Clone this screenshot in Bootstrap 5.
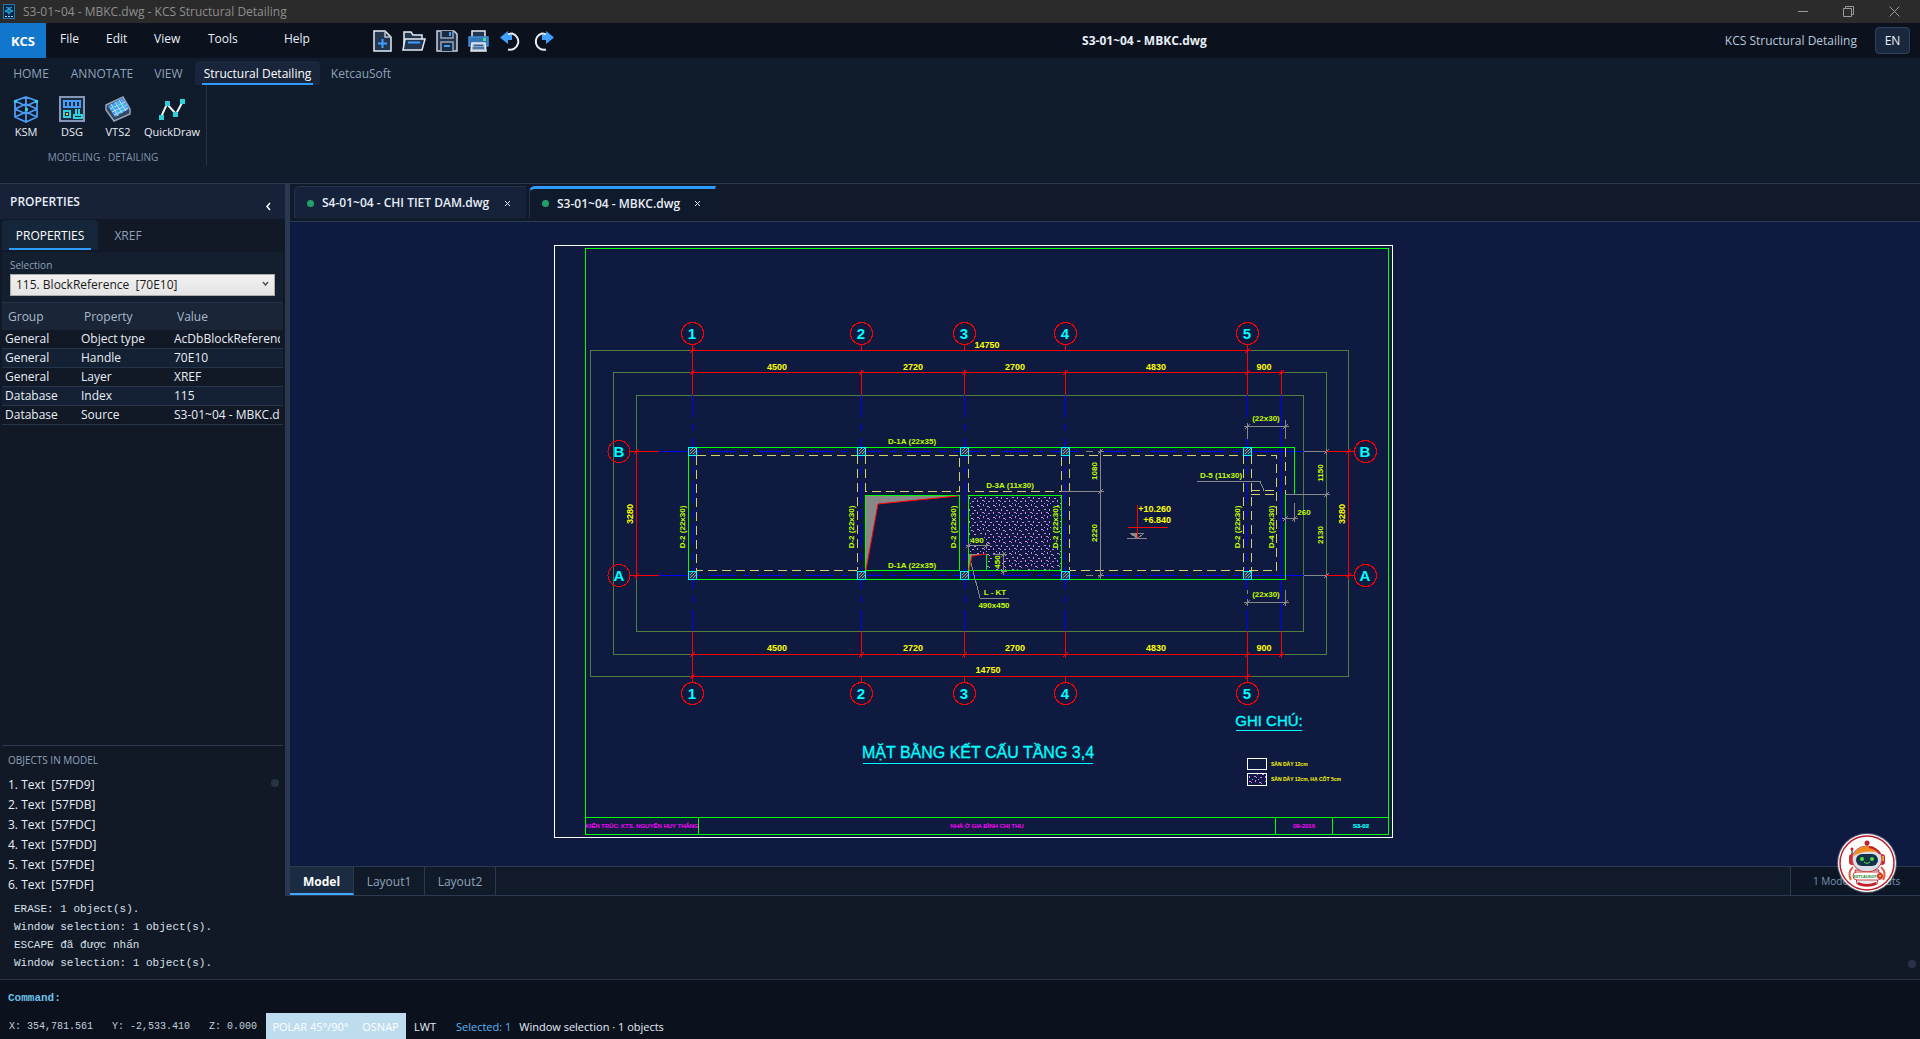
<!DOCTYPE html>
<html lang="en">
<head>
<meta charset="utf-8">
<meta name="viewport" content="width=device-width, initial-scale=1">
<title>S3-01~04 - MBKC.dwg - KCS Structural Detailing</title>
<link href="https://cdn.jsdelivr.net/npm/bootstrap@5.3.0/dist/css/bootstrap.min.css" rel="stylesheet">
<style>
:root{--line:#2a3a50;--ink:#e8eef6;--muted:#8fa2ba;--accent:#2f9bff;--pane:#111826}
body{font:12px/16px "Open Sans","Noto Sans",sans-serif;color:var(--ink);background:#101b2b;min-height:100vh}
button{font:inherit;color:inherit;background:none;border:0;padding:0}
.titlebar{height:23px;background:#2b2b2b;color:#8e8e8e;padding:0 20px 0 3px}
.titlebar .winctl{gap:35px}
.winctl button,.quick button{display:flex}
.menubar{height:35px;background:#0b121e}
.brand{width:46px;background:#1177cc;color:#fff;font-weight:700;font-size:13px}
.menus{width:327px;padding:0 0 3px 14px}
.menus button{text-align:left}
.menus .w46{width:46px}.menus .w48{width:48px}.menus .w54{width:54px}.menus .w76{width:76px}
.quick{gap:10px;width:400px}
.doctitle{font-weight:700}
.menuend{width:404px;padding-right:10px;gap:18px}
.appname{color:#b9c8da}
.lang{width:35px;height:27px;background:#1a283e;border:1px solid #2f4360;border-radius:4px}
.ribbon{height:126px;border-bottom:1px solid var(--line)}
.rtabs{height:27px;padding-top:3px;color:var(--muted)}
.rtabs button{padding-top:1px}
.w62{width:62px}.w80{width:80px}.w53{width:53px}.w125{width:125px}.w82{width:82px}
.rtabs .live{background:#18253a;color:#fff;border-radius:4px 4px 0 0;position:relative}
.rtabs .live::after,.ptabs .live::after{content:"";position:absolute;left:7px;right:7px;bottom:0;height:2px;background:var(--accent)}
.rgroup{width:207px;height:80px;border-right:1px solid #24344a;padding-top:10px}
.toolrow{padding-left:3px}
.tool{width:46px;font-size:11px}
.tool svg{display:block;margin:0 auto 1px}
.tool.wide{width:62px}
.caption{font-size:10px;color:#8194ad}
.side{width:285px;background:var(--pane)}
.splitter{width:5px;background:#2a3850}
.phead{height:35px;background:#172238;font-weight:600;padding:1px 14px 0 10px}
.ptabs{height:32px;padding:1px 2px;color:var(--muted)}
.ptabs button{width:96px;height:30px;border-radius:4px 4px 0 0;padding-top:2px}
.ptabs .other{width:60px}
.ptabs .live{background:#16263a;color:#fff;position:relative}
.pform{margin:1px 2px 0;padding:5px 8px 6px;height:50px;background:#131e2f}
.pform label{font-size:10px;line-height:17px;color:var(--muted);display:block}
.pform select{appearance:none;width:265px;height:22px;border:1px solid #acacac;border-radius:0;padding:0 5px;font:12px/20px "Open Sans","Noto Sans",sans-serif;color:#1b1b1b;background:linear-gradient(#f1f1f1,#e4e4e4)}
.pform .arrow{position:absolute;right:14px;bottom:9px;pointer-events:none}
.props{width:281px;margin:0 2px;table-layout:fixed;border-collapse:collapse}
.props th{font-weight:400;color:#a9b9cd;height:27px;background:#1a2637;border-top:1px solid #223147;padding:2px 6px 0}
.props td{height:19px;padding:0 3px;border-bottom:1px solid #24354a;line-height:18px;white-space:nowrap}
.props td div{overflow:hidden}
.props tr:nth-child(even) td{background:#142033}
.objects{margin:0 2px;border-top:1px solid var(--line);height:151px;position:relative}
.objects h2{font-size:10px;line-height:16px;color:var(--muted);margin:6px 0 7px 6px;font-weight:400}
.objects li{line-height:20px;padding-left:6px;white-space:pre}
.knob{position:absolute;width:8px;height:8px;border-radius:50%;background:#273344}
.dtabs{height:38px;border-bottom:1px solid var(--line);background:#111a2a;padding:2px 4px 3px;gap:3px}
.dtab{border:1px solid #24344c;border-bottom:0;border-right-color:transparent;border-radius:6px 0 0 0;background:#16223a;font-weight:600;padding:1px 14px 0 12px;width:232px}
.dtab.live{width:187px;border-top:3px solid var(--accent);background:#0f1b2c;padding-top:0}
.dot{width:7px;height:7px;border-radius:50%;background:#22a06b}
.canvas{background:#0f1a40;min-height:0}
.canvas svg{width:100%;height:100%;display:block}
.ltabs{height:30px;border-top:1px solid var(--line);border-bottom:1px solid var(--line);background:#111a29;color:var(--muted)}
.ltabs button{width:71px;border-right:1px solid var(--line);padding-top:2px}
.ltabs button.live{width:64px;background:#1b2b42;color:#fff;font-weight:700;border-bottom:2px solid #3fa9ff;padding-top:3px}
.count{width:130px;border-left:1px solid var(--line);padding-left:22px;font-size:10px;background:#0d1624;color:#7b92b3}
.robot{position:absolute;right:22px;bottom:145px}
.monos{font-family:"Liberation Mono","DejaVu Sans Mono",monospace}
.console{height:83px;background:#121926;padding:4px 14px;font-size:11px;line-height:18px;color:#d7e0ea;position:relative}
.command{height:34px;border-top:1px solid #2a3648;background:#0b121e;padding:2px 8px 0;font-size:11px}
.command label{color:#6cc0e8;font-weight:700}
.command input{background:none;border:0;outline:0;color:inherit;font:inherit}
.status{height:26px;background:#0b121e;font-size:11px}
.status>*{padding-top:2px}
.coords{width:266px;padding-left:9px;font-size:10px;color:#c3cedb;gap:19px}
.onmode{background:#bddcee;color:#fff}
.onmode.polar{width:89px}.onmode.osnap{width:51px}
.picked{color:#5cb3f0;padding:2px 8px 0 12px}
.cad text{font-family:"Liberation Sans",Arial,sans-serif;text-anchor:middle}
.cad .dim{fill:#ff0;font-size:9px;font-weight:700}
.cad .lab{fill:#c3ff00;font-size:8px;font-weight:700}
.cad .grd{fill:#0ff;font-size:15px;font-weight:700}
.cad .big{fill:#0ff;font-size:16px;stroke:#0ff;stroke-width:.3}
.cad .head{font-size:15px}
.cad .note{font-size:5px;font-weight:700;fill:#ff0}
.cad .stamp{font-size:6px;fill:#f0f;stroke:#f0f;stroke-width:.2}
.cad .sheet{fill:#0ff;stroke:#0ff;font-weight:700}
.cad .from{text-anchor:start}.cad .till{text-anchor:end}
.cad .edge{shape-rendering:crispEdges;fill:none}
</style>
<script src="https://cdn.jsdelivr.net/npm/bootstrap@5.3.0/dist/js/bootstrap.bundle.min.js"></script>
</head>
<body class="d-flex flex-column vh-100 overflow-hidden position-relative">
<header>
 <div class="titlebar d-flex align-items-center">
  <svg class="me-2" width="12" height="16" viewBox="0 0 12 16"><rect x=".5" y=".5" width="11" height="14" fill="#06254a" stroke="#2478aa"/><path d="M3 3l3 2 3-2M2 7l4-2 4 2-4 2zM6 9v2" stroke="#27b0d8" fill="#1673a8"/><path d="M2 12.500h8" stroke="#a8d8ee" stroke-dasharray="2 1"/></svg>
  <span>S3-01~04 - MBKC.dwg - KCS Structural Detailing</span>
  <div class="winctl d-flex ms-auto align-items-center">
   <button aria-label="Minimize"><svg width="10" height="11"><path d="M0 5.500h10" stroke="#9a9a9a"/></svg></button>
   <button aria-label="Restore"><svg width="11" height="11" fill="none" stroke="#9a9a9a"><path d="M.5 2.500h8v8h-8zM2.500 2.500v-2h8v8h-2"/></svg></button>
   <button aria-label="Close"><svg width="11" height="11"><path d="M.5.5l10 10M10.500.5l-10 10" stroke="#9a9a9a"/></svg></button>
  </div>
 </div>
 <div class="menubar d-flex align-items-center">
  <button class="brand h-100">KCS</button>
  <nav class="menus d-flex align-items-center">
   <button class="w46">File</button><button class="w48">Edit</button><button class="w54">View</button><button class="w76">Tools</button><button>Help</button>
  </nav>
  <div class="quick d-flex align-items-center">
   <button aria-label="New"><svg width="19" height="22" viewBox="0 0 19 22" stroke-width="1.500"><path d="M1 1h11l6 6v14H1z" fill="#24354e" stroke="#e4ebf4"/><path d="M12 1v6h6" fill="none" stroke="#b5c2d3"/><path d="M9.500 9v9M5 13.500h9" stroke="#3fa0ff" stroke-width="2"/></svg></button>
   <button aria-label="Open"><svg width="24" height="22" viewBox="0 0 24 22"><path d="M2 20V2h7l2 3h9v4" fill="#24354e" stroke="#e4ebf4" stroke-width="1.500"/><path d="M1 20L3 9h20l-3 11z" fill="#24354e" stroke="#e4ebf4" stroke-width="1.500"/><path d="M6 12.500h12" stroke="#3fa0ff" stroke-width="2"/></svg></button>
   <button aria-label="Save"><svg width="22" height="22" viewBox="0 0 22 22" stroke-width="1.500"><path d="M1 1h17l3 3v17H1z" fill="#24354e" stroke="#c9d4e2"/><path d="M5 1v7h12V1M5 21v-9h12v9" fill="#1a2a40" stroke="#97a7bb"/><path d="M14 2v4M8 16h6" stroke="#3fa0ff" stroke-width="2"/></svg></button>
   <button aria-label="Print"><svg width="22" height="22" viewBox="0 0 22 22" stroke-width="1.500"><path d="M4 7V1h13v6" fill="#24354e" stroke="#e4ebf4"/><path d="M1 7h19v9H1z" fill="#3473b4" stroke="#3f8edc"/><path d="M4 13h13l1 8H3z" fill="#a8b5c5" stroke="#e4ebf4"/><path d="M6 15.500h9M5 18h11" stroke="#2f62a0"/><rect x="15" y="8" width="3" height="3" fill="#42e288"/></svg></button>
   <button aria-label="Undo"><svg width="22" height="22" viewBox="0 0 22 22"><path d="M8 4.500q2-1 4-1a8 8 0 1 1-4 16" fill="none" stroke="#e4ebf4" stroke-width="2"/><path d="M0 7.500L8 1v4h4v5H8v4z" fill="#3fa0ff"/></svg></button>
   <button aria-label="Redo"><svg width="22" height="22" viewBox="0 0 22 22"><path d="M14 4.500q-2-1-4-1a8 8 0 1 0 4 16" fill="none" stroke="#e4ebf4" stroke-width="2"/><path d="M22 7.500L14 1v4h-4v5h4v4z" fill="#3fa0ff"/></svg></button>
  </div>
  <div class="doctitle flex-fill text-center">S3-01~04 - MBKC.dwg</div>
  <div class="menuend d-flex align-items-center justify-content-end"><span class="appname">KCS Structural Detailing</span><button class="lang">EN</button></div>
 </div>
 <div class="ribbon">
  <nav class="rtabs d-flex"><button class="w62">HOME</button><button class="w80">ANNOTATE</button><button class="w53">VIEW</button><button class="live w125">Structural Detailing</button><button class="w82">KetcauSoft</button></nav>
  <div class="rgroup d-flex flex-column">
   <div class="toolrow d-flex">
    <button class="tool"><svg width="26" height="28" viewBox="0 0 26 28" fill="none" stroke="#4b9bf5" stroke-width="1.800"><path d="M13 2l11 4v16l-11 5-11-5V6zM2 6l11 5 11-5M13 2v25M2 14l11 5 11-5M2 22l11-5 11 5M2 14l11-5 11 5"/><path d="M1 5h3v3H1zM22 5h3v3h-3zM12 13h3v3h-3z" fill="#2fd0d8" stroke="none"/></svg>KSM</button>
    <button class="tool"><svg width="26" height="28" viewBox="0 0 26 28" fill="none" stroke-width="2"><path d="M1 2h24v24H1z" fill="#1d2c42" stroke="#8398b4"/><path d="M5 6h16v6H5zM9 6v6M13 6v6M17 6v6" stroke="#4b9bf5"/><path d="M5 16h6v6H5zM17 20v-6M20 20v-6M15 23v-3h8v3z" stroke="#2fd0d8"/><path d="M7 18h2v2H7z" fill="#f6c552"/></svg>DSG</button>
    <button class="tool"><svg width="26" height="28" viewBox="0 0 26 28"><path d="M1 10L18 2l7 12v5L9 26 1 15z" fill="#33475f" stroke="#93a3b8" stroke-width="1.500"/><path d="M3 11l15-8 6 11-14 8z" fill="#4b9bf5"/><path d="M5 14l15-7M7 17l15-7M9 20l14-7M6 9l7 12M10 7l7 11M14 5l7 11" stroke="#bfe0f5" fill="none"/><path d="M8 12l2 1M13 10l2 1M11 16l2 1M16 14l2 1M12 7l2 1M18 10l2 1" stroke="#2fd0d8" stroke-width="2"/></svg>VTS2</button>
    <button class="tool wide"><svg width="28" height="28" viewBox="0 0 28 28"><path d="M3 22L9 9l9 10 7-13" fill="none" stroke="#eef3fa" stroke-width="2"/><path d="M1 20h5v5H1zM7 6h5v5H7zM15 17h5v5h-5zM22 4h5v5h-5z" fill="#2fd0d8"/></svg>QuickDraw</button>
   </div>
   <div class="caption text-center mt-auto">MODELING · DETAILING</div>
  </div>
 </div>
</header>
<main class="d-flex flex-fill" style="min-height:0">
 <aside class="side d-flex flex-column flex-shrink-0">
  <div class="phead d-flex align-items-center justify-content-between flex-shrink-0"><span>PROPERTIES</span><button aria-label="Collapse" class="pt-2"><svg width="6" height="9"><path d="M5 1L2 4.500 5 8" fill="none" stroke="#fff" stroke-width="1.500"/></svg></button></div>
  <div class="ptabs d-flex flex-shrink-0"><button class="live">PROPERTIES</button><button class="other">XREF</button></div>
  <div class="pform position-relative flex-shrink-0"><label for="sel">Selection</label><select id="sel"><option>115. BlockReference&nbsp; [70E10]</option></select><svg class="arrow" width="7" height="16"><path d="M1 5l2.500 3L6 5" fill="none" stroke="#555" stroke-width="1.500"/></svg></div>
  <table class="props">
   <colgroup><col style="width:76px"><col style="width:93px"><col></colgroup>
   <thead><tr><th>Group</th><th>Property</th><th>Value</th></tr></thead>
   <tbody>
    <tr><td>General</td><td>Object type</td><td><div>AcDbBlockReference</div></td></tr>
    <tr><td>General</td><td>Handle</td><td>70E10</td></tr>
    <tr><td>General</td><td>Layer</td><td>XREF</td></tr>
    <tr><td>Database</td><td>Index</td><td>115</td></tr>
    <tr><td>Database</td><td>Source</td><td><div>S3-01~04 - MBKC.dwg</div></td></tr>
   </tbody>
  </table>
  <section class="objects mt-auto"><h2>OBJECTS IN MODEL</h2>
   <ul class="list-unstyled m-0"><li>1. Text  [57FD9]</li><li>2. Text  [57FDB]</li><li>3. Text  [57FDC]</li><li>4. Text  [57FDD]</li><li>5. Text  [57FDE]</li><li>6. Text  [57FDF]</li></ul>
   <span class="knob end-0 me-1" style="top:33px"></span></section>
 </aside>
 <div class="splitter flex-shrink-0"></div>
 <section class="d-flex flex-column flex-fill" style="min-width:0">
  <div class="dtabs d-flex">
   <div class="dtab d-flex align-items-center justify-content-between"><span class="d-flex align-items-center gap-2"><span class="dot"></span>S4-01~04 - CHI TIET DAM.dwg</span><button class="d-flex" aria-label="Close tab"><svg width="7" height="7"><path d="M1 1l5 5M6 1L1 6" stroke="#dfe7f0"/></svg></button></div>
   <div class="dtab live d-flex align-items-center justify-content-between"><span class="d-flex align-items-center gap-2"><span class="dot"></span>S3-01~04 - MBKC.dwg</span><button class="d-flex" aria-label="Close tab"><svg width="7" height="7"><path d="M1 1l5 5M6 1L1 6" stroke="#dfe7f0"/></svg></button></div>
  </div>
  <div class="canvas flex-fill">
  <svg class="cad" viewBox="290 222 1630 644">
   <defs>
    <pattern id="gravel" width="16" height="12" patternUnits="userSpaceOnUse"><path d="M1 1h2v1h-2zM3 2h1v1h-1zM7 0h1v2h-1zM11 2h2v1h-2zM13 3h1v1h-1zM4 5h2v1h-2zM9 5h1v2h-1zM14 6h2v1h-2zM1 8h1v2h-1zM6 8h2v1h-2zM8 9h1v1h-1zM12 9h2v1h-2zM4 11h1v1h-1zM10 11h1v1h-1z" fill="#dd80ff"/></pattern>
    <g id="pillar"><path d="M-4 -4h8v8h-8z" fill="#2c3654" stroke="#0ff"/><path d="M-3 0l3-3M-3 3l6-6M0 3l3-3" stroke="#999"/></g>
    <path id="tick" d="M-2.500 2.500l5-5M0-3v6M-3 0h6"/>
   </defs>
   <g class="edge">
    <path d="M968.500 495.500h93v75h-75v-16h-18z" fill="url(#gravel)"/>
    <path d="M1051 506h9v41h-9zM971 536h13v8h-13zM993 555h9v14h-9z" fill="#0f1a40"/>
    <path d="M554.500 245.500h838v592h-838z" stroke="#fff"/>
    <path d="M585.500 248.500h803v586h-803zM585.500 817.500h803M698.500 817v17M1275.500 817v17M1332.500 817v17" stroke="#0f0"/>
    <path d="M590.500 350.500h758v326h-758zM613.500 372.500h713v282h-713zM636.500 395.500h667v236h-667z" stroke="#4f7f40"/>
    <path d="M692.500 395v236M861.500 395v236M964.500 395v236M1065.500 395v236M1247.500 395v236" stroke="#00f" stroke-dasharray="22 7 7 7"/>
    <path d="M1281.500 395v236" stroke="#00f"/>
    <path d="M659 451.500h645M659 575.500h645" stroke="#00f" stroke-dasharray="28 7 7 7"/>
    <path d="M1262 451.500h42M1262 575.500h42" stroke="#00f"/>
    <path d="M696.500 455.500h580v115h-207M857 570.500H696.500v-115M857.500 455v115M865.500 455v36h94v-36M968.500 455v36h93v-36M1069.500 455v115M1243.500 455v115M1251.500 455v115M1251 490.500h25M1251 494.500h25M1285.500 448v46" stroke="#d8d070" stroke-dasharray="9 5"/>
    <path d="M865.500 570.500v-75h94v75zM968.500 570.500v-75h93v75zM986.500 554v16M688.500 447.500h606v47h-9v85h-597z" stroke="#0f0"/>
   </g>
   <path d="M866 496h92l-80 8-12 66zM969 554h17l-14 2-3 14z" fill="#888"/>
   <path d="M958 496l-80 8-12 66M986 554l-14 2-3 14" fill="none" stroke="red"/>
   <g class="edge" stroke="#888">
    <path d="M1304 451.500h22M1304 575.500h22M1286 494.500h40M1100.500 451v124M1061 491.500h39M1086 451.500h7M1086 575.500h7M1244 426.500h43M1247.500 423v16M1285.500 420v19M1244 602.500h43M1247.500 590v4M1247.500 599v6M1285.500 590v15M1282 518.500h14M1294.500 503v17M966 545.500h22M1003.500 552v22M993 554.500h13M1197 481.500h63l4 9M971 563l9 35h29M1127 538.500h20"/>
    <path d="M1130.500 533.500h13l-6 5z"/><path d="M1130 533h7v5z" fill="#888"/>
    <use href="#tick" x="1326.500" y="451.500"/><use href="#tick" x="1326.500" y="494.500"/><use href="#tick" x="1326.500" y="575.500"/><use href="#tick" x="1100.500" y="451.500"/><use href="#tick" x="1100.500" y="491.500"/><use href="#tick" x="1100.500" y="575.500"/><use href="#tick" x="1247.500" y="426.500"/><use href="#tick" x="1285.500" y="426.500"/><use href="#tick" x="1247.500" y="602.500"/><use href="#tick" x="1285.500" y="602.500"/><use href="#tick" x="1285.500" y="518.500"/><use href="#tick" x="1294.500" y="518.500"/><use href="#tick" x="968.500" y="545.500"/><use href="#tick" x="986.500" y="545.500"/><use href="#tick" x="1003.500" y="554.500"/><use href="#tick" x="1003.500" y="571.500"/>
   </g>
   <g class="edge" stroke="red">
    <path d="M692 350.500h555M692 372.500h589M692 654.500h589M692 676.500h555M692.500 344v51M861.500 344v6M861.500 372v23M964.500 344v6M964.500 372v23M1065.500 344v6M1065.500 372v23M1247.500 344v51M1281.500 372v23M692.500 631v51M861.500 631v23M861.500 676v6M964.500 631v23M964.500 676v6M1065.500 631v23M1065.500 676v6M1247.500 631v51M1281.500 631v23M630 451.500h29M630 575.500h29M636.500 451v124M1326 451.500h28M1326 575.500h28M1348.500 451v124M1137.500 505v33M1128 527.500h40"/>
    <use href="#tick" x="692.500" y="350.500"/><use href="#tick" x="1247.500" y="350.500"/><use href="#tick" x="692.500" y="372.500"/><use href="#tick" x="861.500" y="372.500"/><use href="#tick" x="964.500" y="372.500"/><use href="#tick" x="1065.500" y="372.500"/><use href="#tick" x="1247.500" y="372.500"/><use href="#tick" x="1281.500" y="372.500"/>
    <use href="#tick" x="692.500" y="676.500"/><use href="#tick" x="1247.500" y="676.500"/><use href="#tick" x="692.500" y="654.500"/><use href="#tick" x="861.500" y="654.500"/><use href="#tick" x="964.500" y="654.500"/><use href="#tick" x="1065.500" y="654.500"/><use href="#tick" x="1247.500" y="654.500"/><use href="#tick" x="1281.500" y="654.500"/>
    <use href="#tick" x="636.500" y="451.500"/><use href="#tick" x="636.500" y="575.500"/><use href="#tick" x="1348.500" y="451.500"/><use href="#tick" x="1348.500" y="575.500"/>
    <circle cx="692.500" cy="333.500" r="11"/><circle cx="861.500" cy="333.500" r="11"/><circle cx="964.500" cy="333.500" r="11"/><circle cx="1065.500" cy="333.500" r="11"/><circle cx="1247.500" cy="333.500" r="11"/>
    <circle cx="692.500" cy="693.500" r="11"/><circle cx="861.500" cy="693.500" r="11"/><circle cx="964.500" cy="693.500" r="11"/><circle cx="1065.500" cy="693.500" r="11"/><circle cx="1247.500" cy="693.500" r="11"/>
    <circle cx="619" cy="451.500" r="11"/><circle cx="619" cy="575.500" r="11"/><circle cx="1365.500" cy="451.500" r="11"/><circle cx="1365.500" cy="575.500" r="11"/>
   </g>
   <g class="edge">
    <use href="#pillar" x="692.500" y="451.500"/><use href="#pillar" x="861.500" y="451.500"/><use href="#pillar" x="964.500" y="451.500"/><use href="#pillar" x="1065.500" y="451.500"/><use href="#pillar" x="1247.500" y="451.500"/>
    <use href="#pillar" x="692.500" y="575.500"/><use href="#pillar" x="861.500" y="575.500"/><use href="#pillar" x="964.500" y="575.500"/><use href="#pillar" x="1065.500" y="575.500"/><use href="#pillar" x="1247.500" y="575.500"/>
    <path d="M1247.500 773.500h19v12h-19z" fill="url(#gravel)" stroke="#fff"/><path d="M1247.500 758.500h19v11h-19z" stroke="#fff"/>
    <path d="M863 763.500h230M1236 730.500h66" stroke="#0ff"/>
   </g>
   <g class="grd"><text x="692" y="339">1</text><text x="861" y="339">2</text><text x="964" y="339">3</text><text x="1065" y="339">4</text><text x="1247" y="339">5</text><text x="692" y="699">1</text><text x="861" y="699">2</text><text x="964" y="699">3</text><text x="1065" y="699">4</text><text x="1247" y="699">5</text><text x="619" y="457">B</text><text x="619" y="581">A</text><text x="1365" y="457">B</text><text x="1365" y="581">A</text></g>
   <g class="dim"><text x="987" y="348">14750</text><text x="777" y="370">4500</text><text x="913" y="370">2720</text><text x="1015" y="370">2700</text><text x="1156" y="370">4830</text><text x="1264" y="370">900</text>
    <text x="988" y="673">14750</text><text x="777" y="651">4500</text><text x="913" y="651">2720</text><text x="1015" y="651">2700</text><text x="1156" y="651">4830</text><text x="1264" y="651">900</text>
    <text transform="translate(633 514) rotate(-90)">3280</text><text transform="translate(1345 514) rotate(-90)">3280</text>
    <text class="till" x="1171" y="512">+10.260</text><text class="till" x="1171" y="523">+6.840</text></g>
   <g class="lab"><text x="912" y="444">D-1A (22x35)</text><text x="912" y="568">D-1A (22x35)</text><text x="1010" y="488">D-3A (11x30)</text><text x="1221" y="478">D-5 (11x30)</text><text x="1266" y="421">(22x30)</text><text x="1266" y="597">(22x30)</text><text x="1304" y="515">260</text><text x="977" y="543">490</text><text x="995" y="595">L - KT</text><text x="994" y="608">490x450</text>
    <text transform="translate(685 527) rotate(-90)">D-2 (22x30)</text><text transform="translate(854 527) rotate(-90)">D-2 (22x30)</text><text transform="translate(956 527) rotate(-90)">D-2 (22x30)</text><text transform="translate(1058 527) rotate(-90)">D-2 (22x30)</text><text transform="translate(1240 527) rotate(-90)">D-2 (22x30)</text><text transform="translate(1274 527) rotate(-90)">D-4 (22x30)</text>
    <text transform="translate(1097 471) rotate(-90)">1080</text><text transform="translate(1097 533) rotate(-90)">2220</text><text transform="translate(1323 473) rotate(-90)">1150</text><text transform="translate(1323 535) rotate(-90)">2130</text><text transform="translate(1000 562) rotate(-90)">450</text></g>
   <text class="big" x="978" y="758">MẶT BẰNG KẾT CẤU TẦNG 3,4</text><text class="big head" x="1269" y="726">GHI CHÚ:</text>
   <g class="note"><text class="from" x="1271" y="766">SÀN DÀY 12cm</text><text class="from" x="1271" y="781">SÀN DÀY 12cm, HẠ CỐT 5cm</text></g>
   <g class="stamp"><text x="642" y="828">KIẾN TRÚC: KTS. NGUYỄN HUY THẮNG</text><text x="987" y="828">NHÀ Ở GIA ĐÌNH CHỊ THU</text><text x="1304" y="828">09-2016</text><text class="sheet" x="1361" y="828">S3-02</text></g>
  </svg>
  </div>
  <div class="ltabs d-flex"><button class="live">Model</button><button>Layout1</button><button>Layout2</button><div class="count ms-auto d-flex align-items-center">1 Model · 2 layouts</div></div>
 </section>
</main>
<footer>
 <div class="console monos"><div>ERASE: 1 object(s).</div><div>Window selection: 1 object(s).</div><div>ESCAPE đã được nhấn</div><div>Window selection: 1 object(s).</div><span class="knob end-0 me-1" style="top:64px"></span></div>
 <div class="command monos d-flex align-items-center"><label for="cmd">Command:</label><input id="cmd" class="flex-fill"></div>
 <div class="status d-flex align-items-center">
  <div class="coords monos d-flex"><span>X: 354,781.561</span><span>Y: -2,533.410</span><span>Z: 0.000</span></div>
  <button class="onmode polar h-100">POLAR 45°/90°</button><button class="onmode osnap h-100">OSNAP</button><button class="px-2">LWT</button>
  <span class="picked">Selected: 1</span><span>Window selection · 1 objects</span>
 </div>
</footer>
<svg class="robot" width="62" height="62" viewBox="-31 -31 62 62">
 <circle r="30" fill="#cfd6e2" opacity=".35"/><circle r="29" fill="#fff"/><circle r="27" fill="#fff" stroke="#b8202c" stroke-width="1.500"/>
 <path d="M0-14v-6M-15-6v-7" stroke="#555" stroke-width="1.500"/><circle cy="-20" r="2.500" fill="#c4202c"/><circle cx="-15" cy="-14" r="1.500" fill="#c4202c"/>
 <path d="M-14 4q-6 6-2 13M14 4q6 6 2 13" fill="none" stroke="#e0603c" stroke-width="2"/>
 <path d="M-12 7h24l-2 14q-10 4-20 0z" fill="#e8e9ee" stroke="#b8202c"/><path d="M-9 19q9 4 18 0v3q-9 3-18 0z" fill="#c4202c"/>
 <rect x="-18" y="-9" width="6" height="11" rx="3" fill="#d02c30"/><rect x="12" y="-9" width="6" height="11" rx="3" fill="#d02c30"/><path d="M16-7v5" stroke="#f4a025" stroke-width="2"/>
 <ellipse cy="-4" rx="15" ry="13" fill="#d9dde6" stroke="#b8404a"/><path d="M-14-7Q-9-17 0-17T12-10Q0-14-14-7z" fill="#f58a1c"/><path d="M2-16q7 1 11 7" stroke="#c4202c" stroke-width="2" fill="none"/>
 <rect x="-11" y="-9" width="22" height="12" rx="6" fill="#16324a"/><circle cx="-5" cy="-4" r="2" fill="#48e43c"/><circle cx="5" cy="-4" r="2" fill="#48e43c"/><path d="M-3-1q3 3 6 0" stroke="#48e43c" fill="none"/>
 <rect x="-14" y="9" width="29" height="8" rx="4" fill="#fff" stroke="#c9473c"/><text x="-1" y="15" text-anchor="middle" font-size="4" font-weight="700" fill="#1c8a3a">KETCAUSOFT</text><circle cx="13" cy="13" r="3" fill="#d8342c"/><circle cx="13" cy="13" r="1" fill="#ffd23c"/>
</svg>
</body>
</html>
